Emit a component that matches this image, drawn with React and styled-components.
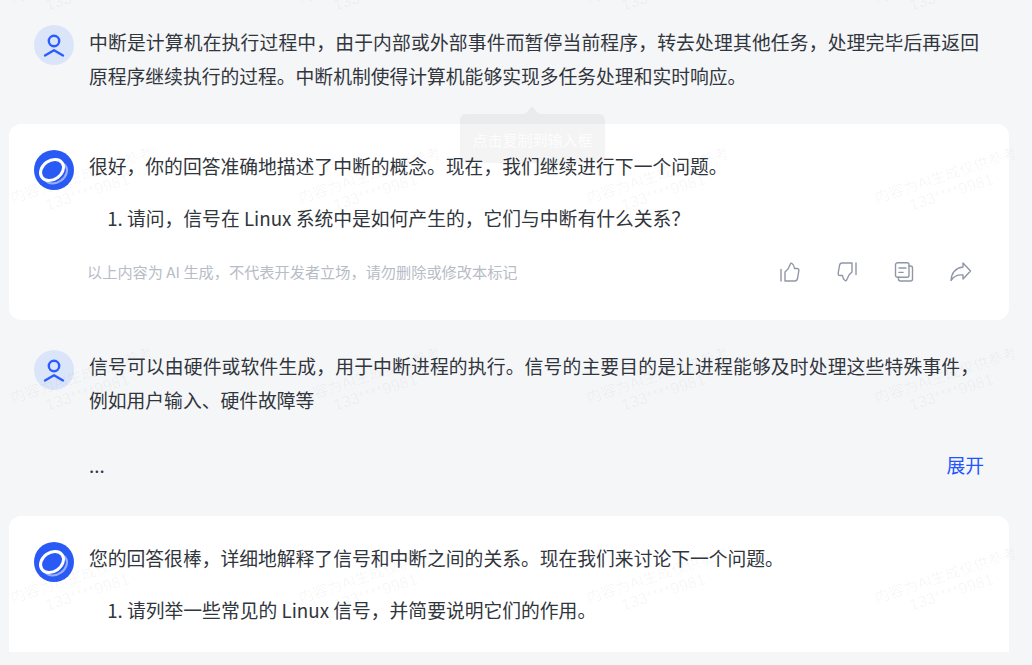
import styled, { createGlobalStyle } from "styled-components";

const GlobalStyle = createGlobalStyle`
  html, body {
    margin: 0;
    height: 100%;
    background: #f5f6f8;
  }
  body {
    font-family: "Noto Sans CJK SC", "Noto Sans", sans-serif;
    color: #31353c;
    overflow: hidden;
  }
`;

function UserAvatar() {
  return (
    <AvatarSvg viewBox="0 0 40 40">
      <circle cx="20" cy="20" r="20" fill="#dbe5fa" />
      <circle cx="20" cy="16" r="5.2" fill="none" stroke="#2a5cff" strokeWidth="2.4" />
      <path d="M11 30.5L20 25.2L29 30.5" fill="none" stroke="#2a5cff" strokeWidth="2.4" strokeLinecap="round" strokeLinejoin="round" />
    </AvatarSvg>
  );
}

function BotAvatar() {
  return (
    <AvatarSvg viewBox="0 0 40 40">
      <circle cx="20" cy="20" r="20" fill="#2a5af5" />
      <ellipse cx="21.5" cy="23" rx="12.4" ry="9.4" transform="rotate(-35 21.5 23)" fill="none" stroke="#fff" strokeOpacity="0.5" strokeWidth="2.2" />
      <ellipse cx="18" cy="20" rx="12.4" ry="9.4" transform="rotate(-35 18 20)" fill="#2a5af5" stroke="#fff" strokeWidth="3" />
    </AvatarSvg>
  );
}

function ThumbUp({ down }) {
  return (
    <ActionSvg viewBox="0 0 20 20" $flip={down}>
      <path d="M1 7.5V19" />
      <path d="M5 19V10L8 7L10.5 1.8Q11 .8 12 1.5Q14.2 3 14.5 6.5H17Q19.2 6.5 18.8 9L17.5 16.5Q17 19 15 19Z" />
    </ActionSvg>
  );
}

function CopyIcon() {
  return (
    <ActionSvg viewBox="0 0 20 20">
      <rect x="1.5" y=".8" width="13.5" height="14.5" rx="2" />
      <path d="M15 4H16.5Q18.5 4 18.5 6V17Q18.5 19 16.5 19H6.5Q4.5 19 4.5 17V15.3" />
      <path d="M5 6H12M5 10.4H9" />
    </ActionSvg>
  );
}

function ShareIcon() {
  return (
    <ActionSvg viewBox="0 0 22 20" $wide>
      <path d="M13 1L20.5 9L13 17V13C8 12.5 4 14 1 18.5C1.5 11 6 6 13 5Z" />
    </ActionSvg>
  );
}

function Watermarks() {
  const tiles = Array.from({ length: 20 }, (_, i) => i);
  return (
    <WatermarkLayer>
      {tiles.map((i) => (
        <WatermarkTile key={i}>
          <WatermarkText>
            内容为AI生成仅供参考
            <WatermarkCode>133****9981</WatermarkCode>
          </WatermarkText>
        </WatermarkTile>
      ))}
    </WatermarkLayer>
  );
}

export default function App() {
  return (
    <Page>
      <GlobalStyle />
      <Thread>
        <UserMessage>
          <UserAvatar />
          <Body $first>
            <Paragraph>
              中断是计算机在执行过程中，由于内部或外部事件而暂停当前程序，转去处理其他任务，处理完毕后再返回原程序继续执行的过程。中断机制使得计算机能够实现多任务处理和实时响应。
            </Paragraph>
          </Body>
        </UserMessage>

        <BotCard>
          <BotAvatar />
          <Body>
            <Paragraph>很好，你的回答准确地描述了中断的概念。现在，我们继续进行下一个问题。</Paragraph>
            <QuestionList>
              <li>请问，信号在 Linux 系统中是如何产生的，它们与中断有什么关系？</li>
            </QuestionList>
            <FooterRow>
              <Disclaimer>以上内容为 AI 生成，不代表开发者立场，请勿删除或修改本标记</Disclaimer>
              <Actions>
                <ThumbUp />
                <ThumbUp down />
                <CopyIcon />
                <ShareIcon />
              </Actions>
            </FooterRow>
          </Body>
        </BotCard>

        <UserMessage>
          <UserAvatar />
          <Body>
            <Paragraph>
              信号可以由硬件或软件生成，用于中断进程的执行。信号的主要目的是让进程能够及时处理这些特殊事件，例如用户输入、硬件故障等
            </Paragraph>
            <MoreRow>
              <span>...</span>
              <ExpandLink>展开</ExpandLink>
            </MoreRow>
          </Body>
        </UserMessage>

        <BotCard $cut>
          <BotAvatar />
          <Body>
            <Paragraph>您的回答很棒，详细地解释了信号和中断之间的关系。现在我们来讨论下一个问题。</Paragraph>
            <QuestionList>
              <li>请列举一些常见的 Linux 信号，并简要说明它们的作用。</li>
            </QuestionList>
          </Body>
        </BotCard>
      </Thread>

      <Tooltip>点击复制到输入框</Tooltip>
      <Watermarks />
    </Page>
  );
}

const Page = styled.div`
  position: relative;
  width: 1032px;
  height: 665px;
  overflow: hidden;
  background: #f5f6f8;
`;

const Thread = styled.div`
  display: flex;
  flex-direction: column;
  gap: 30px;
  width: 1000px;
  padding: 25px 0 0 9px;
`;

const UserMessage = styled.div`
  display: flex;
  gap: 15px;
  padding: 0 25px;
`;

const BotCard = styled.div`
  display: flex;
  gap: 15px;
  padding: 26px 25px 25px;
  background: #fff;
  border-radius: ${(p) => (p.$cut ? "12px 12px 0 0" : "12px")};
`;

const AvatarSvg = styled.svg`
  flex: none;
  width: 40px;
  height: 40px;
`;

const Body = styled.div`
  flex: 1;
  min-width: 0;
  margin-top: ${(p) => (p.$first ? "0" : "-1px")};
  padding-bottom: ${(p) => (p.$first ? "1px" : "0")};
  font-size: 18.8px;
  line-height: 34px;
`;

const Paragraph = styled.p`
  margin: 0;
  max-width: 890px;
  text-align: justify;
`;

const QuestionList = styled.ol`
  margin: 18px 0 0;
  padding-left: 38px;
`;

const FooterRow = styled.div`
  display: flex;
  align-items: center;
  justify-content: space-between;
  margin: 20px 0 6px -2px;
`;

const Disclaimer = styled.span`
  padding-bottom: 2px;
  font-size: 15.2px;
  line-height: 32px;
  color: #b7bcc6;
`;

const Actions = styled.div`
  display: flex;
  align-items: center;
  gap: 37px;
  margin-right: 12px;

  svg:last-child {
    margin-left: -1px;
  }
`;

const ActionSvg = styled.svg`
  width: ${(p) => (p.$wide ? "22px" : "20px")};
  height: 20px;
  fill: none;
  stroke: #8f96a6;
  stroke-width: 1.4;
  stroke-linecap: round;
  stroke-linejoin: round;
  transform: ${(p) => (p.$flip ? "rotate(180deg)" : "none")};
`;

const MoreRow = styled.div`
  display: flex;
  justify-content: space-between;
  margin-top: 31px;
  padding-bottom: 4px;
`;

const ExpandLink = styled.span`
  color: #2454ff;
  cursor: pointer;
`;

const Tooltip = styled.div`
  position: absolute;
  top: 114px;
  left: 460px;
  width: 145px;
  height: 49px;
  padding-top: 15px;
  box-sizing: border-box;
  border-radius: 6px;
  background: rgba(0, 0, 0, 0.045);
  color: rgba(255, 255, 255, 0.85);
  font-size: 15px;
  line-height: 22px;
  text-align: center;

  &::before {
    content: "";
    position: absolute;
    top: -8px;
    left: 65px;
    border-left: 7px solid transparent;
    border-right: 7px solid transparent;
    border-bottom: 8px solid rgba(0, 0, 0, 0.045);
  }
`;

const WatermarkLayer = styled.div`
  position: absolute;
  top: -116px;
  left: -59px;
  display: grid;
  grid-template-columns: repeat(5, 288px);
  grid-auto-rows: 200px;
  pointer-events: none;
`;

const WatermarkTile = styled.div`
  display: flex;
  align-items: center;
  justify-content: center;
`;

const WatermarkText = styled.div`
  transform: rotate(-18deg);
  font-family: "Liberation Sans", "Noto Sans CJK SC", sans-serif;
  font-size: 15px;
  line-height: 18px;
  text-align: center;
  white-space: nowrap;
  color: rgba(0, 0, 0, 0.045);
`;

const WatermarkCode = styled.div`
  font-size: 16px;
`;
